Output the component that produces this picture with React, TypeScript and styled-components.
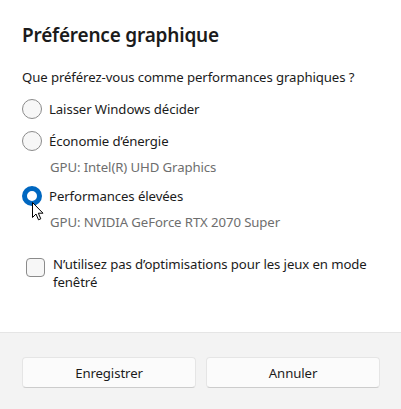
import React from "react";
import styled, { createGlobalStyle } from "styled-components";

const GlobalStyle = createGlobalStyle`
  html, body {
    margin: 0;
    padding: 0;
    background: #ffffff;
  }
  body {
    font-family: "Noto Sans", "Open Sans", sans-serif;
    color: #1b1b1b;
  }
`;

const Dialog = styled.div`
  width: 401px;
  height: 409px;
  display: flex;
  flex-direction: column;
  background: #ffffff;
`;

const Body = styled.div`
  flex: 1;
  padding: 22px 22px 0 22px;
`;

const Title = styled.h1`
  margin: 0;
  font-size: 19px;
  font-weight: 600;
  line-height: 26px;
  letter-spacing: -0.2px;
`;

const Question = styled.p`
  margin: 19px 0 0 0;
  font-size: 13.2px;
  line-height: 20px;
  letter-spacing: -0.1px;
`;

const Options = styled.div`
  margin-top: 6px;
  display: flex;
  flex-direction: column;
`;

const Option = styled.label`
  position: relative;
  display: grid;
  grid-template-columns: 20px 1fr;
  grid-template-rows: 32px;
  grid-auto-rows: auto;
  column-gap: 7px;
  align-items: center;
`;

const Radio = styled.span<{ $checked?: boolean }>`
  width: 20px;
  height: 20px;
  box-sizing: border-box;
  border-radius: 50%;
  border: ${(p) => (p.$checked ? "5px solid #0067c0" : "1px solid #8b8b8b")};
  background: ${(p) => (p.$checked ? "#ffffff" : "#f7f7f7")};
`;

const OptionText = styled.span`
  font-size: 13.2px;
  line-height: 20px;
  letter-spacing: -0.1px;
`;

const Detail = styled.div`
  grid-column: 2;
  align-self: start;
  font-size: 13.2px;
  line-height: 20px;
  color: #6e6e6e;
  letter-spacing: -0.1px;
  margin: 0 0 0 1px;
  height: 23px;
`;

const CheckRow = styled.label`
  display: flex;
  align-items: flex-start;
  gap: 8px;
  margin: 23px 0 0 4px;
`;

const Checkbox = styled.span`
  flex: none;
  width: 19px;
  height: 19px;
  box-sizing: border-box;
  border-radius: 4px;
  border: 1px solid #8b8b8b;
  background: #f7f7f7;
`;

const CheckText = styled.span`
  font-size: 13.2px;
  line-height: 18px;
  letter-spacing: -0.1px;
  margin-top: -3px;
`;

const Footer = styled.div`
  height: 77px;
  flex: none;
  background: #f3f3f3;
  border-top: 1px solid #e5e5e5;
  display: grid;
  grid-template-columns: 1fr 1fr;
  grid-template-rows: 31px;
  column-gap: 10px;
  padding: 24px 21px 0 22px;
  box-sizing: border-box;
`;

const Button = styled.button`
  height: 31px;
  border-radius: 4px;
  border: 1px solid #e5e5e5;
  border-bottom-color: #cccccc;
  background: #fbfbfb;
  font-family: "Noto Sans", "Open Sans", sans-serif;
  font-size: 13.2px;
  color: #1b1b1b;
  letter-spacing: -0.1px;
  padding: 0;
`;

const Cursor = styled.svg`
  position: absolute;
  left: 10px;
  top: 22px;
  width: 12px;
  height: 19px;
`;

export default function App() {
  return (
    <>
      <GlobalStyle />
      <Dialog>
        <Body>
          <Title>Préférence graphique</Title>
          <Question>Que préférez-vous comme performances graphiques ?</Question>
          <Options>
            <Option>
              <Radio />
              <OptionText>Laisser Windows décider</OptionText>
            </Option>
            <Option>
              <Radio />
              <OptionText>Économie d’énergie</OptionText>
              <Detail>GPU: Intel(R) UHD Graphics</Detail>
            </Option>
            <Option>
              <Radio $checked />
              <OptionText>Performances élevées</OptionText>
              <Detail>GPU: NVIDIA GeForce RTX 2070 Super</Detail>
              <Cursor viewBox="0 0 12 19">
                <path
                  d="M0.5 0.5 L0.5 15.5 L4 12 L6.5 17.8 L8.8 16.8 L6.3 11.2 L11 11.2 Z"
                  fill="#ffffff"
                  stroke="#000000"
                  strokeWidth="1"
                  strokeLinejoin="round"
                />
              </Cursor>
            </Option>
          </Options>
          <CheckRow>
            <Checkbox />
            <CheckText>
              N’utilisez pas d’optimisations pour les jeux en mode fenêtré
            </CheckText>
          </CheckRow>
        </Body>
        <Footer>
          <Button>Enregistrer</Button>
          <Button>Annuler</Button>
        </Footer>
      </Dialog>
    </>
  );
}
